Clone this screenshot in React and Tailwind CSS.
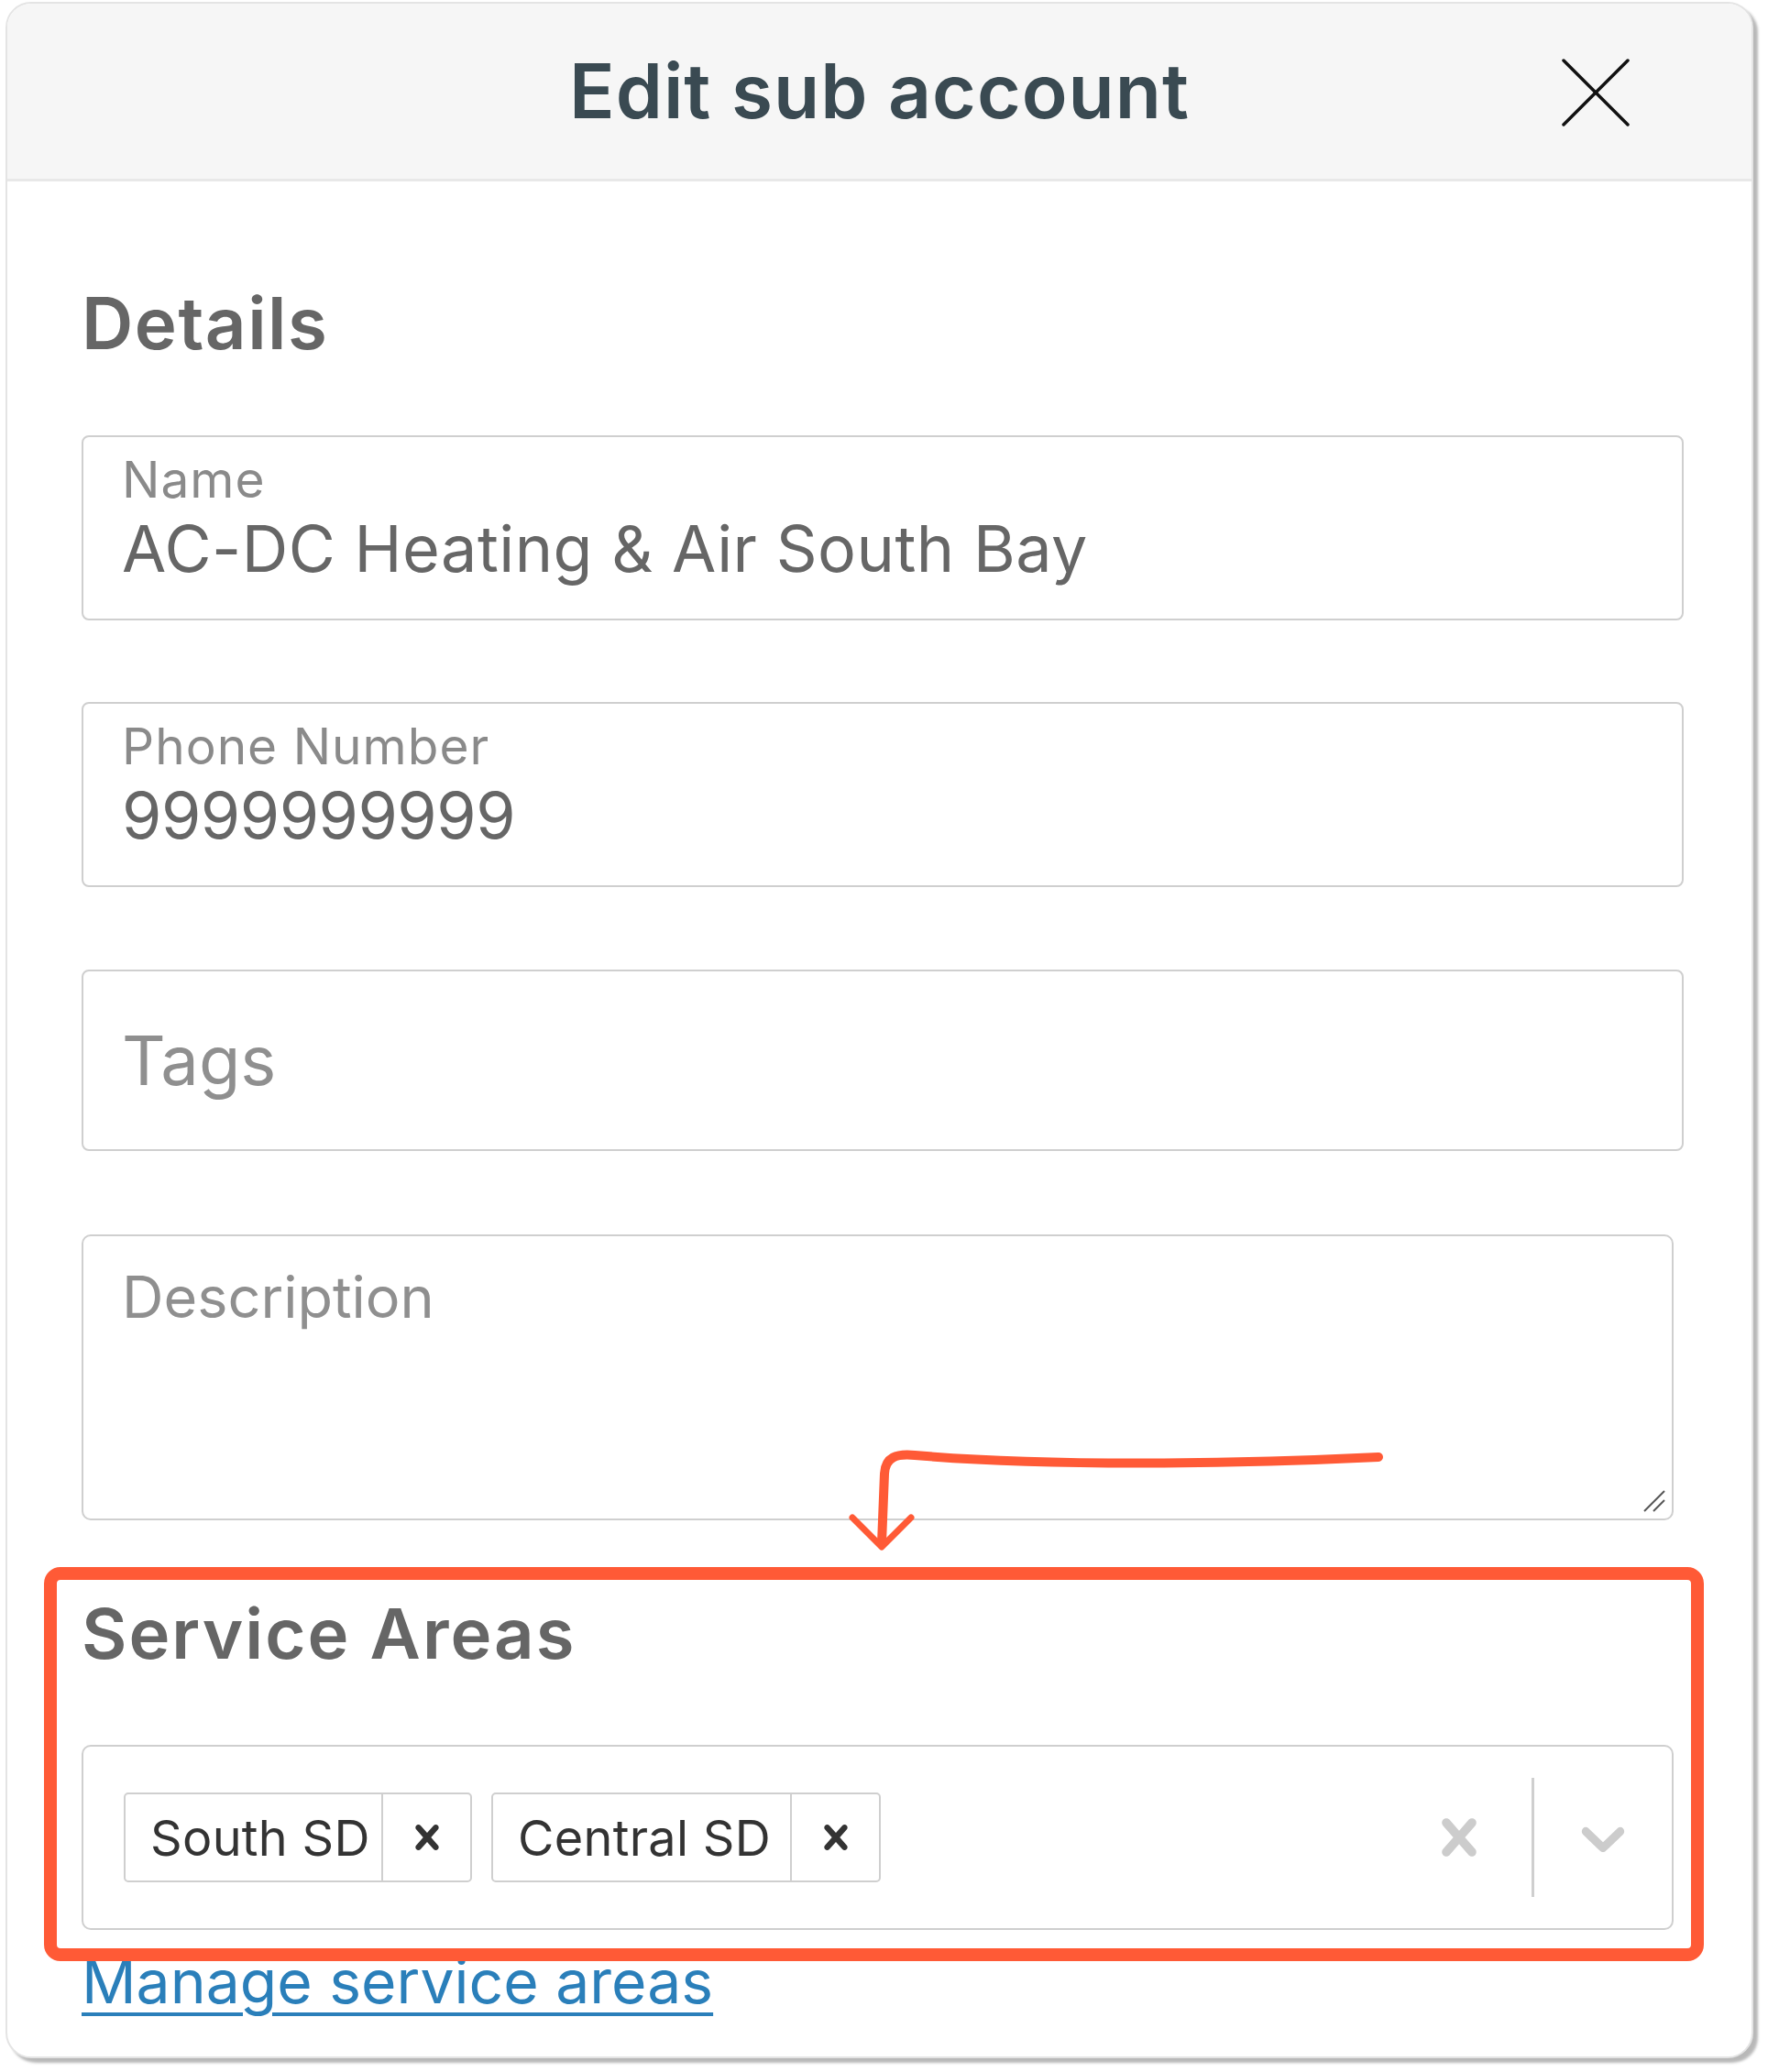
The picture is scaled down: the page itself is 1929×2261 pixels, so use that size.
import React from "react";

const font = { fontFamily: "Inter, 'Noto Sans', sans-serif" };

const CrossIcon = ({ size = 20, color = "#ccc" }) => (
    <svg width={size} height={size} viewBox="0 0 20 20" fill={color}>
        <path d="M14.348 14.849c-0.469 0.469-1.229 0.469-1.697 0l-2.651-3.030-2.651 3.029c-0.469 0.469-1.229 0.469-1.697 0-0.469-0.469-0.469-1.229 0-1.697l2.758-3.15-2.759-3.152c-0.469-0.469-0.469-1.228 0-1.697s1.228-0.469 1.697 0l2.652 3.031 2.651-3.031c0.469-0.469 1.228-0.469 1.697 0s0.469 1.229 0 1.697l-2.758 3.152 2.758 3.150c0.469 0.469 0.469 1.229 0 1.698z" />
    </svg>
);

const ChevronIcon = ({ size = 20, color = "#ccc" }) => (
    <svg width={size} height={size} viewBox="0 0 20 20" fill={color}>
        <path d="M4.516 7.548c0.436-0.446 1.043-0.481 1.576 0l3.908 3.747 3.908-3.747c0.533-0.481 1.141-0.446 1.574 0 0.436 0.445 0.408 1.197 0 1.615-0.406 0.418-4.695 4.502-4.695 4.502-0.217 0.223-0.502 0.335-0.787 0.335s-0.57-0.112-0.789-0.335c0 0-4.287-4.084-4.695-4.502s-0.436-1.17 0-1.615z" />
    </svg>
);

// Filled text field with floating label
const Field = ({ label, value, valueClass = "tracking-[0.5px]" }) => (
    <div className="h-[202px] w-full border-2 border-[#cfcfcf] rounded-[8px] pl-[42px] pt-[16px]">
        <div className="text-[55px] leading-[60px] tracking-[1px] text-[#8a8a8a]">{label}</div>
        <div className={`mt-[6px] text-[70px] leading-[80px] ${valueClass} text-[#666]`}>{value}</div>
    </div>
);

const Chip = ({ label, textWidth }) => (
    <div className="h-[98px] flex border-2 border-[#cfcfcf] rounded-[5px]">
        <div className={`${textWidth} flex items-center pl-[27px] text-[54px] tracking-[0.3px] text-[#333]`}>{label}</div>
        <div className="w-[97px] flex items-center justify-center border-l-2 border-[#cfcfcf]">
            <CrossIcon size={54} color="#333" />
        </div>
    </div>
);

export default function App() {
    return (
        <div className="bg-white min-h-screen px-[6px] pt-[2px]" style={font}>
            <div className="relative w-[1907px] h-[2244px] bg-white rounded-[28px] border-2 border-[#e4e4e4] shadow-[5px_5px_3px_rgba(0,0,0,0.28)] overflow-hidden flex flex-col">
                {/* Header */}
                <div className="relative h-[194px] shrink-0 bg-[#f6f6f6] border-b-[3px] border-[#e8e8e8] flex items-center justify-center">
                    <h1 className="text-[82px] font-semibold text-[#3a4a52] tracking-[1px]">Edit sub account</h1>
                    <button className="absolute right-[133px] top-[60px]">
                        <svg width="74" height="74" viewBox="0 0 74 74" stroke="#111" strokeWidth="3.5" strokeLinecap="round">
                            <line x1="2" y1="2" x2="72" y2="72" />
                            <line x1="72" y1="2" x2="2" y2="72" />
                        </svg>
                    </button>
                </div>

                {/* Body */}
                <div className="pl-[81px] pr-[74px] flex flex-col">
                    <h2 className="mt-[110px] h-[90px] leading-[90px] text-[78px] tracking-[1.5px] font-semibold text-[#666]">Details</h2>

                    <div className="mt-[77px]">
                        <Field label="Name" value="AC-DC Heating & Air South Bay" />
                    </div>
                    <div className="mt-[89px]">
                        <Field label="Phone Number" value="9999999999" valueClass="tracking-[-0.5px]" />
                    </div>
                    <div className="mt-[90px] h-[198px] w-full border-2 border-[#cfcfcf] rounded-[8px] pl-[42px] flex items-center">
                        <span className="text-[74px] text-[#8f8f8f]">Tags</span>
                    </div>
                    <div className="relative mt-[91px] h-[312px] w-[1737px] border-2 border-[#cfcfcf] rounded-[10px] pl-[42px] pt-[26px]">
                        <span className="text-[63px] leading-[80px] text-[#8f8f8f]">Description</span>
                        <svg className="absolute right-[6px] bottom-[6px]" width="28" height="28" viewBox="0 0 28 28" stroke="#555" strokeWidth="2">
                            <line x1="4" y1="26" x2="26" y2="4" />
                            <line x1="14" y1="26" x2="26" y2="14" />
                        </svg>
                    </div>

                    <h2 className="mt-[78px] h-[90px] leading-[90px] text-[76px] font-semibold text-[#666] tracking-[2px]">Service Areas</h2>

                    <div className="mt-[77px] h-[202px] w-[1737px] border-2 border-[#cfcfcf] rounded-[10px] flex items-center pl-[44px]">
                        <div className="flex-1 flex items-center gap-[21px]">
                            <Chip label="South SD" textWidth="w-[279px]" />
                            <Chip label="Central SD" textWidth="w-[324px]" />
                        </div>
                        <div className="w-[158px] flex items-center justify-center">
                            <CrossIcon size={80} />
                        </div>
                        <div className="w-[3px] h-[130px] bg-[#cfcfcf]" />
                        <div className="w-[150px] flex items-center justify-center">
                            <ChevronIcon size={80} />
                        </div>
                    </div>

                    <a href="#" className="mt-[16px] h-[80px] leading-[80px] text-[66px] text-[#2a7fba] underline underline-offset-[10px] decoration-[4px] w-fit">
                        Manage service areas
                    </a>
                </div>

                {/* Annotation: highlight box */}
                <div className="absolute left-[40px] top-[1706px] w-[1811px] h-[430px] border-[14px] border-[#ff5a36] rounded-[18px] pointer-events-none" />

                {/* Annotation: hand drawn arrow */}
                <svg className="absolute left-0 top-0 pointer-events-none" width="1907" height="2244" fill="none" stroke="#ff5a36" strokeLinecap="round" strokeLinejoin="round">
                    <path d="M1496 1586 C1330 1594 1130 1596 990 1584 C970 1582 958 1586 957 1604 L954 1680" strokeWidth="10" />
                    <path d="M922 1652 L954 1684 L986 1652" strokeWidth="7" />
                </svg>
            </div>
        </div>
    );
}
